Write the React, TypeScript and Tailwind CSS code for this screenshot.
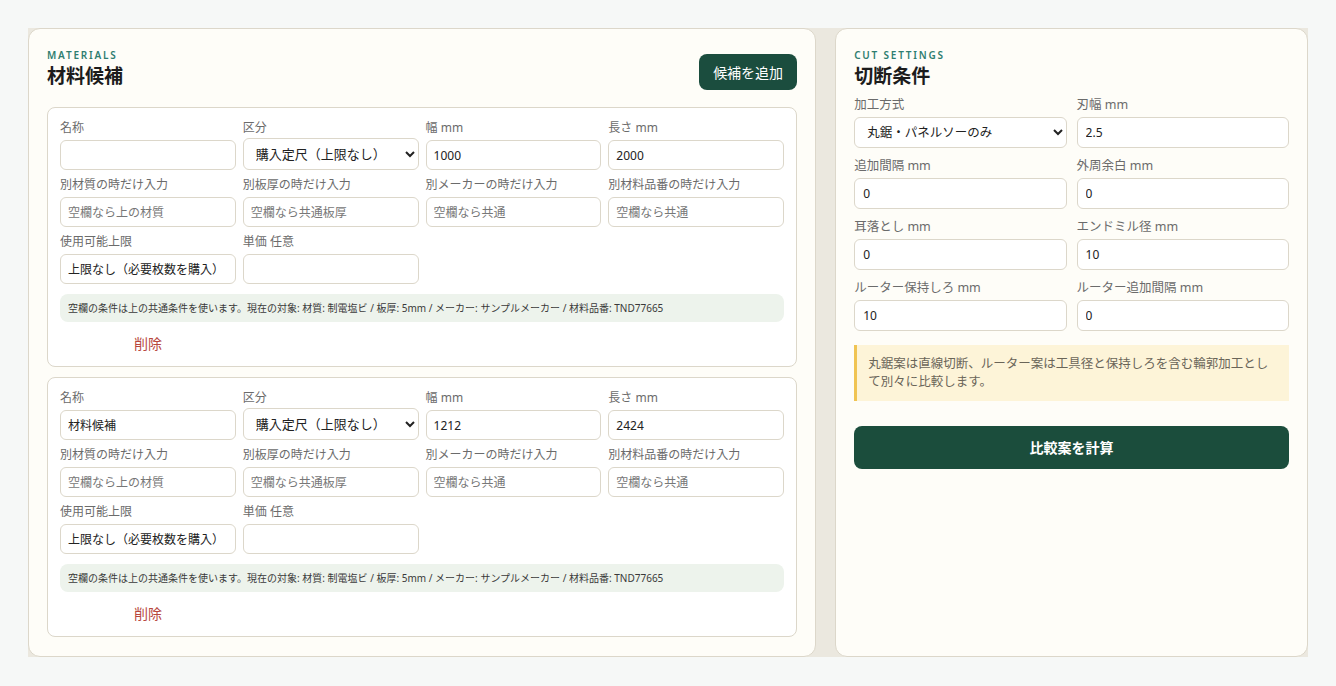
import React from "react";

const inputCls =
  "h-[30px] w-full rounded-[6px] border border-[#dcd7ca] bg-white px-[7px] text-[12px] text-[#222] placeholder:text-[#777] outline-none";
const selectCls =
  "-mt-[2px] h-[32px] w-full rounded-[6px] border border-[#dcd7ca] bg-white pl-[8px] pr-[4px] text-[13px] text-[#222] outline-none";

function Field({ label, children }: { label: string; children: React.ReactNode }) {
  return (
    <div className="flex flex-col gap-[4px]">
      <span className="h-[16px] text-[12px] leading-[16px] text-[#6b6b6b] whitespace-nowrap">{label}</span>
      {children}
    </div>
  );
}

function RField({ label, children }: { label: string; children: React.ReactNode }) {
  return (
    <div className="flex flex-col gap-[4px]">
      <span className="h-[16px] text-[12.5px] leading-[16px] text-[#6b6b6b] whitespace-nowrap">{label}</span>
      {children}
    </div>
  );
}

type Card = { name: string; w: string; l: string };

function MaterialCard({ c }: { c: Card }) {
  return (
    <div className="rounded-[8px] border border-[#dcd7ca] bg-white px-[12px] pt-[12px] pb-[8px]">
      <div className="grid grid-cols-4 gap-[7px]">
        <Field label="名称">
          <input className={inputCls} defaultValue={c.name} />
        </Field>
        <Field label="区分">
          <select className={selectCls} defaultValue="a">
            <option value="a">購入定尺（上限なし）</option>
          </select>
        </Field>
        <Field label="幅 mm">
          <input className={inputCls} defaultValue={c.w} />
        </Field>
        <Field label="長さ mm">
          <input className={inputCls} defaultValue={c.l} />
        </Field>
        <Field label="別材質の時だけ入力">
          <input className={inputCls} placeholder="空欄なら上の材質" />
        </Field>
        <Field label="別板厚の時だけ入力">
          <input className={inputCls} placeholder="空欄なら共通板厚" />
        </Field>
        <Field label="別メーカーの時だけ入力">
          <input className={inputCls} placeholder="空欄なら共通" />
        </Field>
        <Field label="別材料品番の時だけ入力">
          <input className={inputCls} placeholder="空欄なら共通" />
        </Field>
        <Field label="使用可能上限">
          <input className={inputCls} defaultValue="上限なし（必要枚数を購入）" />
        </Field>
        <Field label="単価 任意">
          <input className={inputCls} />
        </Field>
      </div>
      <div className="mt-[10px] flex h-[28px] items-center rounded-[8px] bg-[#edf3ec] px-[8px] text-[10px] text-[#3a3a3a] whitespace-nowrap">
        空欄の条件は上の共通条件を使います。現在の対象: 材質: 制電塩ビ / 板厚: 5mm / メーカー: サンプルメーカー / 材料品番: TND77665
      </div>
      <div className="mt-[6px] grid grid-cols-4 gap-[7px]">
        <button className="h-[30px] text-[14px] text-[#b8473d]">削除</button>
      </div>
    </div>
  );
}

export default function App() {
  const cards: Card[] = [
    { name: "", w: "1000", l: "2000" },
    { name: "材料候補", w: "1212", l: "2424" },
  ];
  const rInput =
    "h-[31px] w-full rounded-[6px] border border-[#dcd7ca] bg-white px-[8px] text-[12px] text-[#222] outline-none";
  return (
    <div className="min-h-[686px] bg-[#f6f8f7] p-[28px] font-['Noto_Sans','Noto_Sans_CJK_JP',sans-serif]">
      <div className="grid grid-cols-[5fr_3fr] gap-[19px] bg-[#ebe8df]">
        <section className="rounded-[12px] border border-[#dcd7ca] bg-[#fefdf8] px-[18px] pt-[19px] pb-[19px]">
          <div className="flex items-end justify-between">
            <div>
              <div className="text-[10px] leading-[14px] font-semibold tracking-[0.18em] text-[#2f7d70]">MATERIALS</div>
              <h2 className="text-[19px] leading-[28px] font-semibold text-[#1c1c1c]">材料候補</h2>
            </div>
            <button className="h-[36px] rounded-[8px] bg-[#1b4d3e] px-[14px] text-[14px] text-white">候補を追加</button>
          </div>
          <div className="mt-[17px] flex flex-col gap-[10px]">
            {cards.map((c, i) => (
              <MaterialCard key={i} c={c} />
            ))}
          </div>
        </section>
        <section className="rounded-[12px] border border-[#dcd7ca] bg-[#fefdf8] px-[18px] pt-[19px] pb-[19px]">
          <div className="text-[10px] leading-[14px] font-semibold tracking-[0.18em] text-[#2f7d70]">CUT SETTINGS</div>
          <h2 className="text-[19px] leading-[28px] font-semibold text-[#1c1c1c]">切断条件</h2>
          <div className="mt-[7px] grid grid-cols-2 gap-x-[10px] gap-y-[10px]">
            <RField label="加工方式">
              <select className="h-[31px] w-full rounded-[6px] border border-[#dcd7ca] bg-white pl-[8px] pr-[4px] text-[12.5px] text-[#222] outline-none" defaultValue="a">
                <option value="a">丸鋸・パネルソーのみ</option>
              </select>
            </RField>
            <RField label="刃幅 mm">
              <input className={rInput} defaultValue="2.5" />
            </RField>
            <RField label="追加間隔 mm">
              <input className={rInput} defaultValue="0" />
            </RField>
            <RField label="外周余白 mm">
              <input className={rInput} defaultValue="0" />
            </RField>
            <RField label="耳落とし mm">
              <input className={rInput} defaultValue="0" />
            </RField>
            <RField label="エンドミル径 mm">
              <input className={rInput} defaultValue="10" />
            </RField>
            <RField label="ルーター保持しろ mm">
              <input className={rInput} defaultValue="10" />
            </RField>
            <RField label="ルーター追加間隔 mm">
              <input className={rInput} defaultValue="0" />
            </RField>
          </div>
          <div className="mt-[14px] border-l-[3px] border-[#f0c453] bg-[#fdf4d8] py-[10px] pl-[11px] pr-[12px] text-[12.5px] leading-[18px] text-[#6a6558]">
            丸鋸案は直線切断、ルーター案は工具径と保持しろを含む輪郭加工として別々に比較します。
          </div>
          <button className="mt-[25px] h-[43px] w-full rounded-[8px] bg-[#1b4d3c] text-[14px] font-bold text-white">比較案を計算</button>
        </section>
      </div>
    </div>
  );
}
